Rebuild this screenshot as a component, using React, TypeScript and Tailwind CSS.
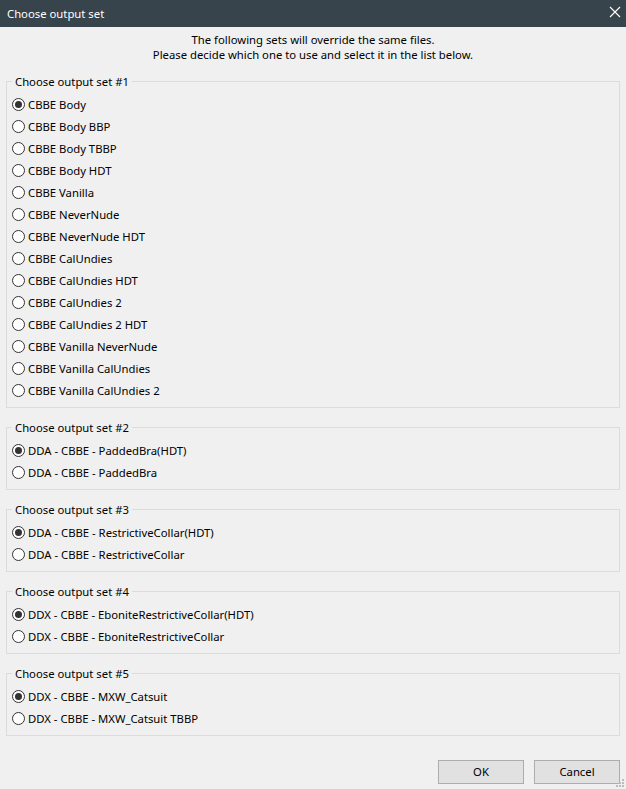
import React from "react";

const groups: { title: string; items: string[] }[] = [
  {
    title: "Choose output set #1",
    items: [
      "CBBE Body",
      "CBBE Body BBP",
      "CBBE Body TBBP",
      "CBBE Body HDT",
      "CBBE Vanilla",
      "CBBE NeverNude",
      "CBBE NeverNude HDT",
      "CBBE CalUndies",
      "CBBE CalUndies HDT",
      "CBBE CalUndies 2",
      "CBBE CalUndies 2 HDT",
      "CBBE Vanilla NeverNude",
      "CBBE Vanilla CalUndies",
      "CBBE Vanilla CalUndies 2",
    ],
  },
  {
    title: "Choose output set #2",
    items: ["DDA - CBBE - PaddedBra(HDT)", "DDA - CBBE - PaddedBra"],
  },
  {
    title: "Choose output set #3",
    items: ["DDA - CBBE - RestrictiveCollar(HDT)", "DDA - CBBE - RestrictiveCollar"],
  },
  {
    title: "Choose output set #4",
    items: ["DDX - CBBE - EboniteRestrictiveCollar(HDT)", "DDX - CBBE - EboniteRestrictiveCollar"],
  },
  {
    title: "Choose output set #5",
    items: ["DDX - CBBE - MXW_Catsuit", "DDX - CBBE - MXW_Catsuit TBBP"],
  },
];

function Radio({ label, checked }: { label: string; checked: boolean }) {
  return (
    <div className="flex h-[22px] items-center">
      <span className="flex h-[13px] w-[13px] items-center justify-center rounded-full border border-[#333333] bg-white">
        {checked && <span className="h-[7px] w-[7px] rounded-full bg-[#333333]" />}
      </span>
      <span className="ml-[3px] text-[11.3px] leading-[15px] text-black">{label}</span>
    </div>
  );
}

export default function App() {
  return (
    <div
      className="relative flex h-[789px] w-[626px] flex-col overflow-hidden bg-[#f0f0f0]"
      style={{ fontFamily: '"Noto Sans", "Open Sans", sans-serif' }}
    >
      <div className="flex h-[27px] shrink-0 items-center justify-between bg-[#37444c] pl-[7px] pr-[1px]">
        <span className="text-[11.3px] leading-[15px] text-white">Choose output set</span>
        <svg width="20" height="20" viewBox="0 0 20 20" className="mb-[4px]">
          <path d="M5 5 L15 15 M15 5 L5 15" stroke="#ffffff" strokeWidth="1.1" />
        </svg>
      </div>
      <div className="mt-[5px] flex flex-col items-center text-[11.3px] leading-[15px] text-black">
        <span>The following sets will override the same files.</span>
        <span>Please decide which one to use and select it in the list below.</span>
      </div>
      <div className="mt-[12px] flex flex-col gap-[12px] px-[6px]">
        {groups.map((g) => (
          <fieldset key={g.title} className="border border-[#dcdcdc] px-[5px] pb-[6px] pt-[4px]">
            <legend className="px-[3px] text-[11.3px] leading-[15px] text-black">{g.title}</legend>
            {g.items.map((it, i) => (
              <Radio key={it} label={it} checked={i === 0} />
            ))}
          </fieldset>
        ))}
      </div>
      <div className="mt-auto mb-[5px] flex justify-end gap-[10px] pr-[6px]">
        <button className="h-[24px] w-[86px] border border-[#adadad] bg-[#e1e1e1] text-[11.3px] text-black">
          OK
        </button>
        <button className="h-[24px] w-[86px] border border-[#adadad] bg-[#e1e1e1] text-[11.3px] text-black">
          Cancel
        </button>
      </div>
      <svg width="10" height="10" viewBox="0 0 10 10" className="absolute bottom-[1px] right-[1px]">
        {[
          [8, 2],
          [8, 5],
          [5, 5],
          [8, 8],
          [5, 8],
          [2, 8],
        ].map(([x, y]) => (
          <rect key={`${x}-${y}`} x={x - 1} y={y - 1} width="2" height="2" fill="#bcbcbc" />
        ))}
      </svg>
    </div>
  );
}
